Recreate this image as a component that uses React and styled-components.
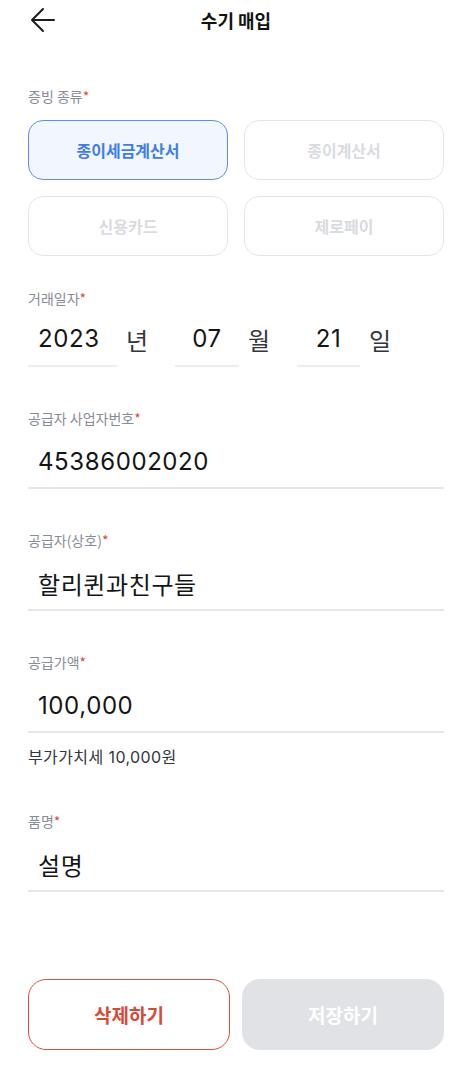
import React from "react";
import styled, { createGlobalStyle } from "styled-components";

const GlobalStyle = createGlobalStyle`
  html, body {
    margin: 0;
    padding: 0;
    background: #ffffff;
  }
  body {
    font-family: "Noto Sans CJK KR", "Noto Sans", sans-serif;
    color: #1b1c1f;
  }
`;

const TYPES = ["종이세금계산서", "종이계산서", "신용카드", "제로페이"];

const App = () => {
  return (
    <Page>
      <GlobalStyle />
      <Header>
        <BackButton aria-label="뒤로">
          <svg width="26" height="26" viewBox="0 0 26 26" fill="none">
            <path
              d="M24 13H2M13 2L2 13l11 11"
              stroke="#1b1c1f"
              strokeWidth="2"
              strokeLinecap="round"
              strokeLinejoin="round"
            />
          </svg>
        </BackButton>
        <Title>수기 매입</Title>
      </Header>

      <Form>
        <Section>
          <Label>
            증빙 종류<Star>*</Star>
          </Label>
          <TypeGrid>
            {TYPES.map((t, i) => (
              <TypeButton key={t} $active={i === 0}>
                {t}
              </TypeButton>
            ))}
          </TypeGrid>
        </Section>

        <Section>
          <Label>
            거래일자<Star>*</Star>
          </Label>
          <DateRow>
            <DateInput $width="89px" $left>
              2023
            </DateInput>
            <DateUnit>년</DateUnit>
            <DateInput $width="64px">07</DateInput>
            <DateUnit>월</DateUnit>
            <DateInput $width="63px">21</DateInput>
            <DateUnit>일</DateUnit>
          </DateRow>
        </Section>

        <Section>
          <Label>
            공급자 사업자번호<Star>*</Star>
          </Label>
          <Input>45386002020</Input>
        </Section>

        <Section>
          <Label>
            공급자(상호)<Star>*</Star>
          </Label>
          <Input>할리퀸과친구들</Input>
        </Section>

        <Section>
          <Label>
            공급가액<Star>*</Star>
          </Label>
          <Input>100,000</Input>
          <Helper>부가가치세 10,000원</Helper>
        </Section>

        <Section>
          <Label>
            품명<Star>*</Star>
          </Label>
          <Input>설명</Input>
        </Section>
      </Form>

      <Footer>
        <ActionButton $variant="delete">삭제하기</ActionButton>
        <ActionButton $variant="disabled">저장하기</ActionButton>
      </Footer>
    </Page>
  );
};

export default App;

const Page = styled.div`
  display: flex;
  flex-direction: column;
  min-height: 100vh;
  box-sizing: border-box;
  padding: 0 22px 20px 28px;
`;

const Header = styled.header`
  position: relative;
  height: 40px;
  display: flex;
  align-items: center;
  justify-content: center;
`;

const BackButton = styled.button`
  position: absolute;
  left: 2px;
  top: 7px;
  padding: 0;
  border: 0;
  background: none;
  display: flex;
`;

const Title = styled.h1`
  margin: 0;
  font-size: 18px;
  font-weight: 700;
  color: #111214;
`;

const Form = styled.div`
  display: flex;
  flex-direction: column;
  padding-top: 47px;
`;

const Section = styled.section`
  display: flex;
  flex-direction: column;
  margin-bottom: 42px;

  &:first-child {
    margin-bottom: 33px;
  }
`;

const Label = styled.div`
  font-size: 14px;
  line-height: 18px;
  color: #878c96;
`;

const Star = styled.span`
  color: #e0483a;
`;

const TypeGrid = styled.div`
  display: grid;
  grid-template-columns: 200px 200px;
  column-gap: 16px;
  row-gap: 16px;
  margin-top: 15px;
`;

const TypeButton = styled.button`
  height: 60px;
  box-sizing: border-box;
  border-radius: 15px;
  border: 1px solid ${(p) => (p.$active ? "#5b8ef0" : "#e3e5e8")};
  background: ${(p) => (p.$active ? "#f1f6ff" : "#ffffff")};
  color: ${(p) => (p.$active ? "#3f7de6" : "#d9dbdf")};
  font-family: inherit;
  font-size: 16px;
  font-weight: 700;
  padding: 0;
`;

const DateRow = styled.div`
  display: flex;
  align-items: flex-start;
`;

const DateInput = styled.div`
  width: ${(p) => p.$width};
  height: 60px;
  box-sizing: border-box;
  padding: 4px 0 0 ${(p) => (p.$left ? "10px" : "0")};
  border-bottom: 2px solid #eceef0;
  display: flex;
  align-items: center;
  justify-content: ${(p) => (p.$left ? "flex-start" : "center")};
  font-family: "Inter", "Noto Sans CJK KR", sans-serif;
  font-size: 24px;
  letter-spacing: 0.6px;
  color: #141517;
`;

const DateUnit = styled.div`
  width: 58px;
  height: 60px;
  box-sizing: border-box;
  padding: 4px 0 0 9px;
  display: flex;
  align-items: center;
  font-size: 24px;
  color: #34363b;
`;

const Input = styled.div`
  height: 62px;
  box-sizing: border-box;
  padding: 8px 0 0 10px;
  border-bottom: 2px solid #e6e7ea;
  display: flex;
  align-items: center;
  font-family: "Inter", "Noto Sans CJK KR", sans-serif;
  font-size: 24px;
  letter-spacing: 0.6px;
  color: #141517;
`;

const Helper = styled.div`
  margin-top: 14px;
  margin-bottom: 3px;
  font-family: "Inter", "Noto Sans CJK KR", sans-serif;
  font-size: 16px;
  letter-spacing: 0.4px;
  line-height: 20px;
  color: #33353a;
`;

const Footer = styled.div`
  margin-top: auto;
  display: grid;
  grid-template-columns: 202px 202px;
  column-gap: 12px;
`;

const ActionButton = styled.button`
  height: 71px;
  box-sizing: border-box;
  border-radius: 18px;
  border: ${(p) => (p.$variant === "delete" ? "1.5px solid #d9503f" : "0")};
  background: ${(p) => (p.$variant === "delete" ? "#ffffff" : "#e0e2e5")};
  color: ${(p) => (p.$variant === "delete" ? "#d64a38" : "#ffffff")};
  font-family: inherit;
  font-size: 19px;
  font-weight: 700;
  padding: 0;
`;
